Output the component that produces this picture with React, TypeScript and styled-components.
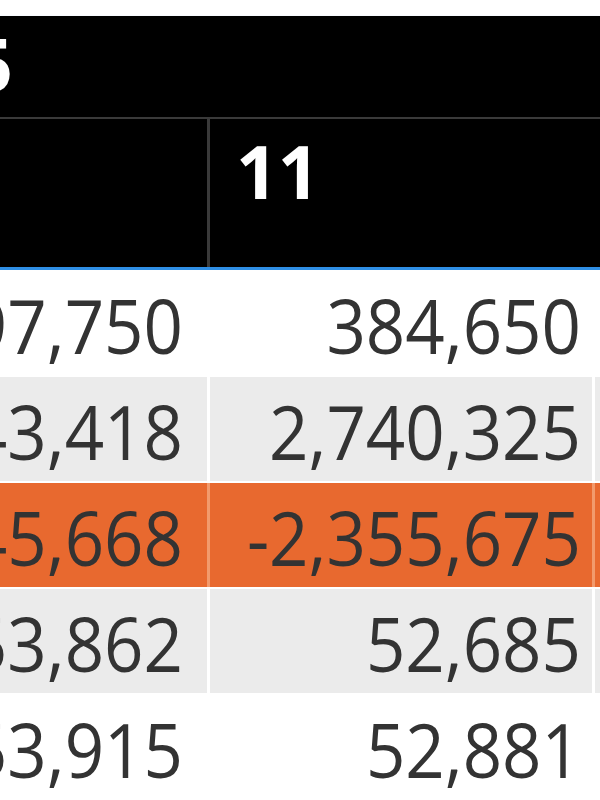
import React from "react";
import styled, { createGlobalStyle } from "styled-components";

const GlobalStyle = createGlobalStyle`
  html, body {
    margin: 0;
    padding: 0;
    background: #ffffff;
    overflow: hidden;
  }
  body {
    font-family: "Open Sans", "Noto Sans", "Liberation Sans", sans-serif;
    width: 600px;
    height: 800px;
  }
`;

const Page = styled.div`
  width: 600px;
  height: 800px;
  padding-top: 16px;
  box-sizing: border-box;
  overflow: hidden;
  display: flex;
  flex-direction: column;
`;

const Header = styled.div`
  background: #000000;
  display: flex;
  flex-direction: column;
  border-bottom: 3px solid #2f8fe6;
  box-shadow: 0 1px 2px rgba(90, 170, 240, 0.6);
`;

const GroupRow = styled.div`
  height: 101px;
  border-bottom: 2px solid #3a3a3a;
  display: flex;
`;

const GroupCell = styled.div`
  width: 13px;
  flex: none;
  display: flex;
  justify-content: flex-end;
  align-items: flex-start;
  padding-top: 11px;
  box-sizing: border-box;
`;

const HeaderText = styled.span`
  color: #ffffff;
  font-weight: 700;
  font-size: 73px;
  line-height: 1;
  white-space: nowrap;
`;

const ColumnRow = styled.div`
  height: 148px;
  display: grid;
  grid-template-columns: 207px 385px 8px;
`;

const HeadCell = styled.div<{ $divider: boolean }>`
  background: #000000;
  display: flex;
  align-items: flex-start;
  padding: 15px 0 0 26px;
  box-sizing: border-box;
  border-left: 3px solid ${(p) => (p.$divider ? "#3a3a3a" : "#000000")};
`;

const Body = styled.div`
  display: flex;
  flex-direction: column;
  row-gap: 2px;
  padding-top: 1px;
  background: #ffffff;
`;

const Row = styled.div<{ $bg: string; $line: string }>`
  height: 104px;
  display: grid;
  grid-template-columns: 207px 382px 11px;
  column-gap: 3px;
  background: ${(p) => p.$line};
  & > div {
    background: ${(p) => p.$bg};
  }
`;

const Cell = styled.div<{ $padRight: number }>`
  display: flex;
  justify-content: flex-end;
  align-items: flex-start;
  padding: 19px ${(p) => p.$padRight}px 0 0;
  box-sizing: border-box;
  min-width: 0;
`;

const Value = styled.span`
  display: inline-block;
  flex: none;
  font-size: 69px;
  line-height: 1;
  color: #333333;
  white-space: nowrap;
  transform: scaleY(1.1);
`;

type RowData = { left: string; right: string; kind: "white" | "grey" | "orange" };

const rows: RowData[] = [
  { left: "297,750", right: "384,650", kind: "white" },
  { left: "2,743,418", right: "2,740,325", kind: "grey" },
  { left: "-2,445,668", right: "-2,355,675", kind: "orange" },
  { left: "53,862", right: "52,685", kind: "grey" },
  { left: "53,915", right: "52,881", kind: "white" },
];

const palette = {
  white: { bg: "#ffffff", line: "#ffffff" },
  grey: { bg: "#ebebeb", line: "#ffffff" },
  orange: { bg: "#e8692f", line: "#f29a6c" },
};

export default function App() {
  return (
    <>
      <GlobalStyle />
      <Page>
        <Header>
          <GroupRow>
            <GroupCell>
              <HeaderText>2015</HeaderText>
            </GroupCell>
          </GroupRow>
          <ColumnRow>
            <HeadCell $divider={false} />
            <HeadCell $divider={true}>
              <HeaderText>11</HeaderText>
            </HeadCell>
            <HeadCell $divider={false} />
          </ColumnRow>
        </Header>
        <Body>
          {rows.map((r, i) => (
            <Row key={i} $bg={palette[r.kind].bg} $line={palette[r.kind].line}>
              <Cell $padRight={24}>
                <Value>{r.left}</Value>
              </Cell>
              <Cell $padRight={11}>
                <Value>{r.right}</Value>
              </Cell>
              <Cell $padRight={0} />
            </Row>
          ))}
        </Body>
      </Page>
    </>
  );
}
